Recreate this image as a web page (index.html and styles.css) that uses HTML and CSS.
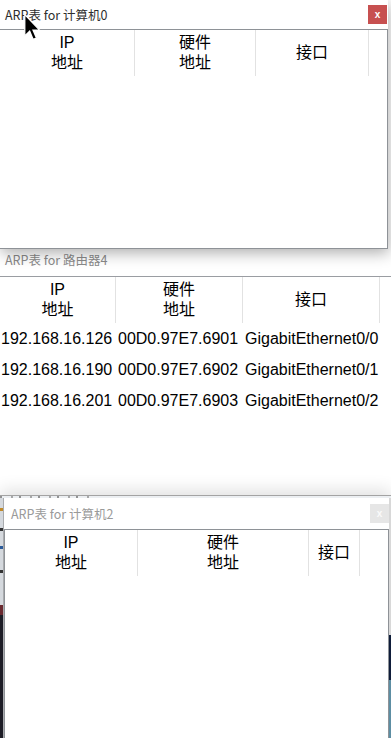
FILE: index.html
```html
<!DOCTYPE html>
<html lang="zh">
<head>
<meta charset="utf-8">
<title>ARP表</title>
<link rel="stylesheet" href="styles.css">
</head>
<body>
  <section class="win w1">
    <header class="titlebar">
      <span class="title">ARP表 for 计算机0</span>
      <span class="close">x</span>
    </header>
    <div class="frame">
      <div class="thead">
        <div class="th">IP<br>地址</div>
        <div class="th">硬件<br>地址</div>
        <div class="th">接口</div>
        <div class="th"></div>
      </div>
    </div>
  </section>

  <section class="win w2">
    <header class="titlebar">
      <span class="title">ARP表 for 路由器4</span>
    </header>
    <div class="frame">
      <div class="thead">
        <div class="th">IP<br>地址</div>
        <div class="th">硬件<br>地址</div>
        <div class="th">接口</div>
        <div class="th"></div>
      </div>
      <div class="row">
        <div class="td">192.168.16.126</div>
        <div class="td">00D0.97E7.6901</div>
        <div class="td">GigabitEthernet0/0</div>
        <div class="td"></div>
      </div>
      <div class="row">
        <div class="td">192.168.16.190</div>
        <div class="td">00D0.97E7.6902</div>
        <div class="td">GigabitEthernet0/1</div>
        <div class="td"></div>
      </div>
      <div class="row">
        <div class="td">192.168.16.201</div>
        <div class="td">00D0.97E7.6903</div>
        <div class="td">GigabitEthernet0/2</div>
        <div class="td"></div>
      </div>
    </div>
  </section>

  <div class="desktop">
    <div class="strip"><span class="frag"></span></div>
    <div class="deskrow">
      <div class="gutter gutter-left">
        <span class="seg seg-light"><i class="dot d1"></i><i class="dot d2"></i><i class="dot d3"></i><i class="dot d4"></i></span>
        <span class="seg seg-red"></span>
        <span class="seg seg-dark"></span>
      </div>
      <section class="win w3">
        <header class="titlebar">
          <span class="title">ARP表 for 计算机2</span>
          <span class="close">x</span>
        </header>
        <div class="frame">
          <div class="thead">
            <div class="th">IP<br>地址</div>
            <div class="th">硬件<br>地址</div>
            <div class="th">接口</div>
            <div class="th"></div>
          </div>
        </div>
      </section>
      <div class="gutter gutter-right">
        <span class="seg seg-light"></span>
        <span class="seg seg-navy"></span>
        <span class="seg seg-teal"></span>
      </div>
    </div>
  </div>

  <svg class="cursor" width="17" height="27" viewBox="0 0 13 21">
    <path d="M0.5 0.5 V17 L4.3 13.4 L7 19.8 L9.6 18.7 L6.9 12.5 H12 Z" fill="#000" stroke="#fff" stroke-width="1"/>
  </svg>
</body>
</html>
```

FILE: styles.css
```css
* { box-sizing: border-box; }
html, body { margin: 0; padding: 0; }
body {
  width: 391px;
  height: 738px;
  overflow: hidden;
  background: #fff;
  position: relative;
  display: flex;
  flex-direction: column;
  font-family: "Liberation Sans", "Noto Sans CJK SC", sans-serif;
  color: #000;
}

.win {
  background: #fff;
  display: flex;
  flex-direction: column;
}

.titlebar {
  display: flex;
  align-items: center;
  justify-content: space-between;
  flex: none;
  font-family: "Noto Sans CJK SC", sans-serif;
  font-size: 12.5px;
  line-height: 17px;
}

.close {
  width: 19px;
  height: 19px;
  display: flex;
  align-items: center;
  justify-content: center;
  font: bold 10px "Liberation Sans", sans-serif;
  color: #fff;
}

.frame {
  flex: 1;
  display: flex;
  flex-direction: column;
}

.thead, .row { display: grid; }
.thead { height: 46px; flex: none; }

.th {
  border-right: 1px solid #e2e2e2;
  display: flex;
  align-items: center;
  justify-content: center;
  text-align: center;
  font-size: 16px;
  line-height: 20px;
}
.th:last-child { border-right: none; }

/* window 1 (active) */
.w1 {
  width: 388px;
  height: 249px;
  flex: none;
  position: relative;
  z-index: 2;
  box-shadow: 1px 4px 14px rgba(0, 0, 0, 0.32);
}
.w1 .titlebar { height: 29px; padding-left: 5px; color: #2e2e2e; }
.w1 .close { background: #c75050; margin-right: 1px; }
.w1 .frame { border: 1px solid #8e9297; border-left: none; }
.w1 .thead { grid-template-columns: 135px 121px 113px 1fr; }

/* window 2 (inactive, behind) */
.w2 {
  height: 246px;
  flex: none;
  position: relative;
  z-index: 1;
}
.w2 .titlebar {
  height: 27px;
  align-items: flex-start;
  padding: 2px 0 0 5px;
  color: #8a8a8a;
}
.w2 .frame { border-top: 1px solid #9a9da2; }
.w2 .thead, .w2 .row { grid-template-columns: 116px 127px 137px 1fr; }
.row { height: 31px; }
.td {
  display: flex;
  align-items: center;
  padding-left: 2px;
  font-size: 16px;
  white-space: nowrap;
}
.row .td:first-child { padding-left: 1px; }

/* desktop + window 3 */
.desktop {
  flex: 1;
  position: relative;
  z-index: 2;
  background: #d9dcdf;
  border-top: 1px solid #a3a3a3;
  display: flex;
  flex-direction: column;
  box-shadow: 0 -5px 16px rgba(0, 0, 0, 0.12);
}
.strip {
  height: 2px;
  flex: none;
  background: #eceff2;
  display: flex;
}
.frag {
  width: 90px;
  height: 2px;
  background: repeating-linear-gradient(90deg, #6a6a6a 0 2px, transparent 2px 11px, #888 11px 13px, transparent 13px 19px);
  opacity: 0.7;
}
.deskrow { flex: 1; display: flex; }

.gutter { display: flex; flex-direction: column; flex: none; }
.gutter-left { width: 3px; }
.gutter-right { width: 2px; }
.seg { display: block; flex: none; position: relative; }
.gutter-left .seg-light { height: 107px; background: #d5d9de; }
.gutter-left .seg-red { height: 10px; background: #6a2a30; }
.gutter-left .seg-dark { flex: 1; background: #1d1d26; }
.gutter-right .seg-light { height: 137px; background: #d8d8d8; }
.gutter-right .seg-navy { height: 45px; background: #0f1d3a; }
.gutter-right .seg-teal { flex: 1; background: #5d8ea3; }
.dot { position: absolute; left: 0; width: 3px; height: 3px; background: #2a4a8a; }
.d1 { top: 10px; background: #c08a2a; }
.d2 { top: 30px; background: #333; }
.d3 { top: 48px; background: #2a5a9a; }
.d4 { top: 72px; background: #333; }

.w3 {
  flex: 1;
  border-left: 1px solid #a9abae;
}
.w3 .titlebar { height: 31px; padding-left: 7px; color: #9a9a9a; }
.w3 .close { background: #e6e6e6; color: #fafafa; }
.w3 .frame { border: 1px solid #8e9297; border-bottom: none; }
.w3 .thead { grid-template-columns: 133px 171px 51px 1fr; }

.cursor {
  position: absolute;
  left: 24px;
  top: 14px;
  z-index: 5;
}
```
